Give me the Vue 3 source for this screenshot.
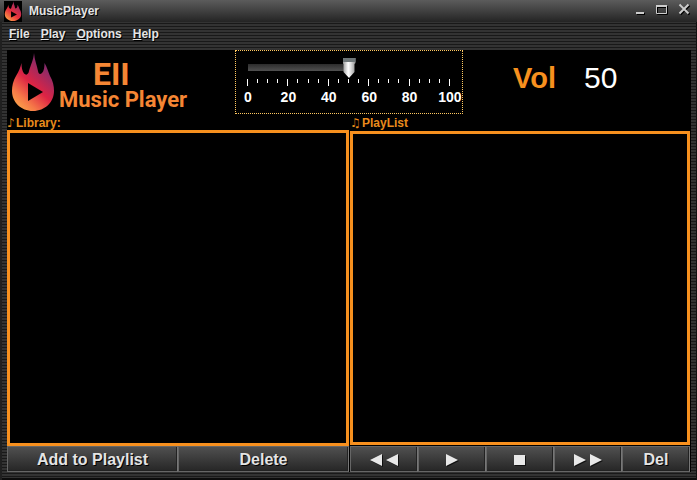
<script setup>
import { ref } from 'vue'

const volume = ref(50)
const ticks = Array.from({ length: 21 }, (_, i) => i * 5)
const labels = [0, 20, 40, 60, 80, 100]
const menus = ['File', 'Play', 'Options', 'Help']
</script>

<template>
  <div class="window">
    <header class="titlebar">
      <svg class="app-icon" viewBox="-2 -1 46 62" preserveAspectRatio="none" aria-hidden="true">
        <defs>
          <linearGradient id="flame-small" x1="0.1" y1="1" x2="0.7" y2="0.1">
            <stop offset="0" stop-color="#fdb04a" />
            <stop offset="0.5" stop-color="#e8303c" />
            <stop offset="1" stop-color="#a02a60" />
          </linearGradient>
        </defs>
        <path fill="url(#flame-small)" d="M22 0C22.5 7 25 12 26 18C26.500 21 28 22 30 20C32 18 32.500 14 32.500 10C35 14 36 18 38 23C41 28 42 33 42 38C42 49 33 58 21 58C9 58 0 49 0 38C0 33 1 28 4 23C7 18 8.500 14 9.500 10C9.500 14 10 18 12 20.500C14.500 23 16.500 21 17 18C18.500 12 21.500 7 22 0Z" />
        <path fill="#000" d="M16 29L31 38.500L16 48Z" />
      </svg>
      <h1>MusicPlayer</h1>
      <div class="window-buttons">
        <button type="button" aria-label="Minimize">
          <svg viewBox="0 0 12 12"><path d="M2 10H10" /></svg>
        </button>
        <button type="button" aria-label="Maximize">
          <svg viewBox="0 0 12 12"><path d="M0 3H11" /><path class="thin" d="M0.5 3V10.5H10.5V3" /></svg>
        </button>
        <button type="button" aria-label="Close">
          <svg viewBox="0 0 12 12"><path d="M1.5 1.500L10.500 10.500M10.500 1.500L1.500 10.500" /></svg>
        </button>
      </div>
    </header>

    <nav class="menubar">
      <button v-for="m in menus" :key="m" type="button"><u>{{ m[0] }}</u>{{ m.slice(1) }}</button>
    </nav>

    <main class="content">
      <section class="top">
        <div class="brand">
          <svg class="flame" viewBox="0 0 44 60" aria-hidden="true">
            <defs>
              <linearGradient id="flame" x1="0.1" y1="1" x2="0.7" y2="0.1">
                <stop offset="0" stop-color="#fdb04a" />
                <stop offset="0.25" stop-color="#f67a48" />
                <stop offset="0.55" stop-color="#dd2444" />
                <stop offset="1" stop-color="#7d2c70" />
              </linearGradient>
            </defs>
            <path fill="url(#flame)" d="M22 0C22.5 7 25 12 26 18C26.500 21 28 22 30 20C32 18 32.500 14 32.500 10C35 14 36 18 38 23C41 28 42 33 42 38C42 49 33 58 21 58C9 58 0 49 0 38C0 33 1 28 4 23C7 18 8.500 14 9.500 10C9.500 14 10 18 12 20.500C14.500 23 16.500 21 17 18C18.500 12 21.500 7 22 0Z" />
            <path fill="#000" d="M16 30L31 39L16 48Z" />
          </svg>
          <div class="brand-text">
            <span class="brand-name">EII</span>
            <span class="brand-sub">Music Player</span>
          </div>
        </div>

        <div class="slider">
          <input v-model.number="volume" type="range" min="0" max="100" aria-label="Volume" :style="{ '--fill': volume + '%' }">
          <div class="ticks">
            <span v-for="t in ticks" :key="t" :class="{ major: t % 20 === 0 }"></span>
          </div>
          <div class="scale">
            <span v-for="l in labels" :key="l">{{ l }}</span>
          </div>
        </div>

        <div class="volume">
          <span class="volume-label">Vol</span>
          <output>{{ volume }}</output>
        </div>
      </section>

      <section class="panels">
        <div class="panel">
          <h2><span class="note">♪</span>Library:</h2>
          <div class="list"></div>
          <div class="buttons">
            <button type="button">Add to Playlist</button>
            <button type="button">Delete</button>
          </div>
        </div>
        <div class="panel playlist">
          <h2><span class="note">♫</span>PlayList</h2>
          <div class="list"></div>
          <div class="buttons">
            <button type="button" aria-label="Previous">
              <svg class="wide" viewBox="0 0 28 12"><path d="M12 0V12L0 6ZM28 0V12L16 6Z" /></svg>
            </button>
            <button type="button" aria-label="Play">
              <svg viewBox="0 0 12 12"><path d="M0 0V12L12 6Z" /></svg>
            </button>
            <button type="button" aria-label="Stop">
              <svg viewBox="0 0 12 12"><path d="M0 1H11V11H0Z" /></svg>
            </button>
            <button type="button" aria-label="Next">
              <svg class="wide" viewBox="0 0 28 12"><path d="M0 0V12L12 6ZM16 0V12L28 6Z" /></svg>
            </button>
            <button type="button">Del</button>
          </div>
        </div>
      </section>
    </main>
  </div>
</template>

<style>
body {
  background: #1a1a1a;
}
</style>

<style scoped>
.window {
  box-sizing: border-box;
  min-height: 100vh;
  display: flex;
  flex-direction: column;
  padding: 0 2px 2px;
  background: repeating-linear-gradient(#333 0 2px, #191919 2px 3px);
  box-shadow: inset 2px 0 #202020, inset -1px 0 #111, inset 0 -2px #0c0c0c;
  font: bold 12px/14px "Liberation Sans", Arial, sans-serif;
  color: #e4e4e4;
}

button {
  padding: 0;
  border: 0;
  background: none;
  color: inherit;
  font: inherit;
}

.titlebar {
  display: flex;
  align-items: center;
  height: 22px;
  margin: 0 -2px;
  padding: 0 7px 0 4px;
  background: linear-gradient(#5c5c5c, #242424);
}

.app-icon {
  width: 18px;
  height: 21px;
  background: #000;
}

h1 {
  flex: 1;
  margin: 0 0 0 7px;
  font-size: 12px;
  line-height: 24px;
  text-shadow: 1px 1px #000;
}

.window-buttons {
  display: flex;
  gap: 10px;
  padding-bottom: 4px;
}

.window-buttons svg {
  display: block;
  width: 12px;
  height: 12px;
  fill: none;
  stroke: #ccc;
  stroke-width: 2;
  filter: drop-shadow(1px 1px #000);
}

.window-buttons .thin {
  stroke-width: 1;
}

.menubar {
  display: flex;
  gap: 11px;
  align-items: flex-start;
  box-sizing: border-box;
  height: 28px;
  padding: 5px 7px 0;
}

.menubar button {
  text-shadow: 1px 1px #000;
}

.content {
  flex: 1;
  display: flex;
  flex-direction: column;
  margin: 0 4px 6px 5px;
  background: #000;
}

.top {
  display: grid;
  grid-template-columns: 1fr 1fr 1fr;
  height: 65px;
}

.brand {
  display: flex;
  gap: 3px;
  padding: 3px 0 0 5px;
}

.flame {
  width: 44px;
  height: 60px;
}

.brand-text {
  display: flex;
  flex-direction: column;
  padding-top: 5px;
  color: #f58634;
  font-family: Roboto, sans-serif;
}

.brand-name {
  padding-left: 34px;
  font-size: 32px;
  line-height: 32px;
}

.brand-sub {
  font-size: 22px;
  line-height: 20px;
}

.slider {
  box-sizing: border-box;
  height: 64px;
  padding: 7px 12px 0;
  border: 1px dotted #ffc860;
}

.slider input {
  appearance: none;
  display: block;
  width: calc(100% + 12px);
  height: 20px;
  margin: 0 -6px;
  background: none;
  outline: 0;
}

.slider input::-webkit-slider-runnable-track {
  height: 20px;
  margin: 0 6px;
  background: linear-gradient(90deg, transparent var(--fill), #000 var(--fill)), linear-gradient(transparent 6px, #2c2c2c 6px, #505050 13px, transparent 13px);
}

.slider input::-webkit-slider-thumb {
  appearance: none;
  width: 13px;
  height: 20px;
  background: linear-gradient(#6e7678 0 4px, transparent 4px), linear-gradient(90deg, #999, #fff 40%, #ddd 60%, #888);
  clip-path: polygon(0 0, 100% 0, 100% 5px, 12px 6px, 12px 14px, 50% 100%, 1px 14px, 1px 6px, 0 5px);
}

.ticks {
  display: flex;
  justify-content: space-between;
  height: 8px;
  padding-top: 1px;
  margin-left: -1px;
}

.ticks span {
  width: 1px;
  height: 4px;
  background: #fff;
}

.ticks .major {
  height: 7px;
}

.scale {
  display: flex;
  justify-content: space-between;
  padding-top: 1px;
  color: #fff;
  font-size: 14px;
  line-height: 18px;
}

.scale span {
  display: flex;
  justify-content: center;
  width: 0;
}

.volume {
  display: flex;
  align-items: center;
  gap: 28px;
  padding: 0 0 10px 50px;
}

.volume-label {
  color: #f7901e;
  font-size: 29px;
  line-height: 32px;
}

output {
  color: #fff;
  font-size: 30px;
  font-weight: 400;
  line-height: 32px;
}

.panels {
  flex: 1;
  display: grid;
  grid-template-columns: 1fr 1fr;
}

.panel {
  display: flex;
  flex-direction: column;
}

.playlist {
  padding: 0 1px;
}

.playlist .list {
  margin: 1px 0;
}

h2 {
  display: flex;
  height: 15px;
  margin: 0;
  color: #e98b1c;
  font-size: 12px;
  line-height: 16px;
}

.note {
  width: 9px;
  font-family: "DejaVu Sans", sans-serif;
}

.playlist .note {
  width: 12px;
}

.list {
  flex: 1;
  border: 3px solid #f7901e;
}

.buttons {
  display: flex;
}

.buttons button {
  flex: 1 1 0;
  display: flex;
  align-items: center;
  justify-content: center;
  box-sizing: border-box;
  height: 26px;
  padding-top: 2px;
  border: 1px solid #666;
  border-right-color: #777;
  background: linear-gradient(#505050, #262626);
  box-shadow: inset -1px -1px #222;
  font-size: 16px;
  text-shadow: 1px 1px #000;
}

.buttons svg {
  width: 12px;
  height: 12px;
  fill: #e8e8e8;
  filter: drop-shadow(1px 1px #111);
}

.buttons .wide {
  width: 28px;
}
</style>
